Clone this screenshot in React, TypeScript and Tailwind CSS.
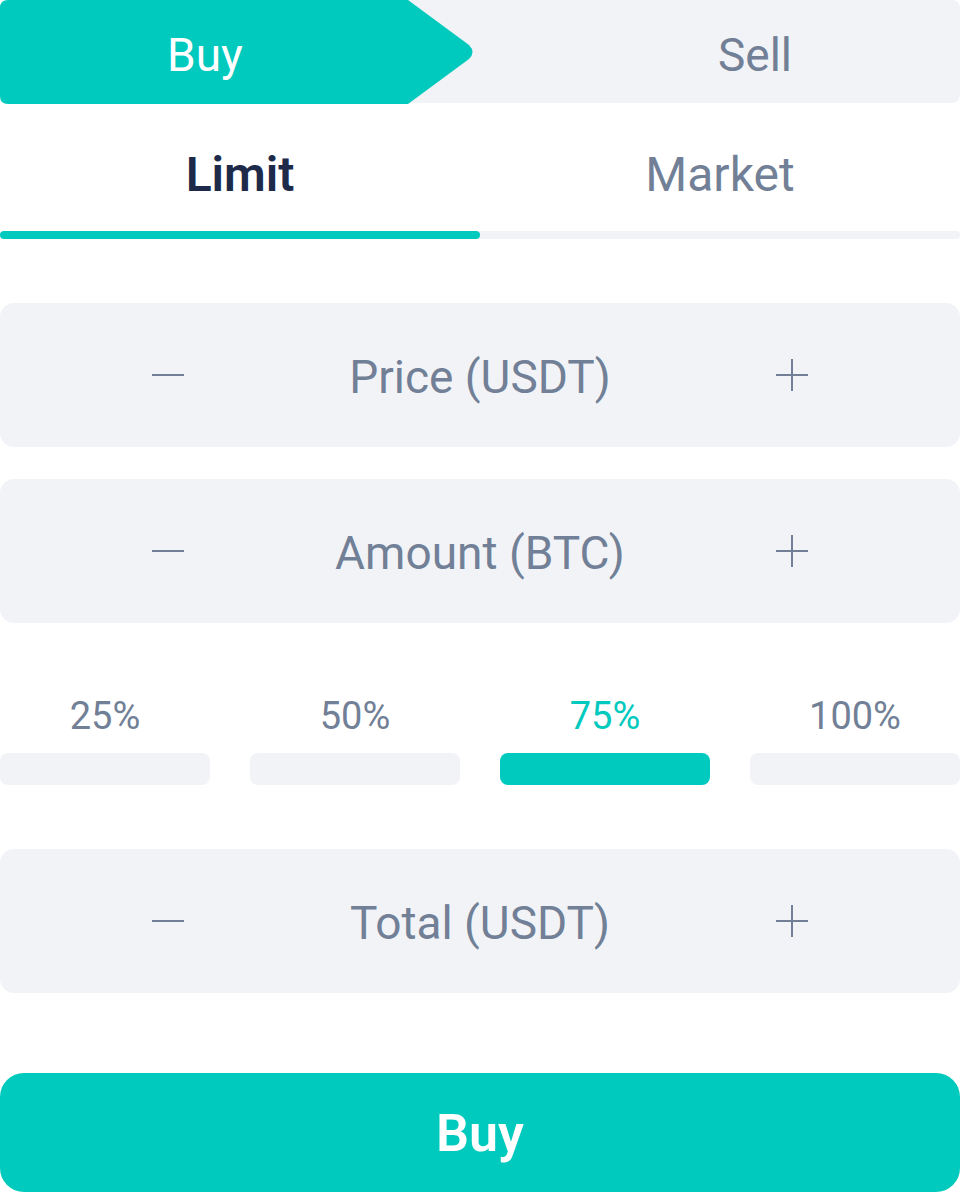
import { useState } from 'react'

const TEAL = '#00c9bd'

const Minus = () => (
  <svg width="32" height="32" viewBox="0 0 32 32" fill="none">
    <path d="M0 16h32" stroke="#718096" strokeWidth="2" />
  </svg>
)

const Plus = () => (
  <svg width="32" height="32" viewBox="0 0 32 32" fill="none">
    <path d="M0 16h32M16 0v32" stroke="#718096" strokeWidth="2" />
  </svg>
)

const StepField = ({ label }: { label: string }) => (
  <div className="h-[144px] rounded-[14px] bg-[#f2f3f7] flex items-center justify-between px-[152px]">
    <Minus />
    <span className="text-[46px] text-[#718096] leading-none pt-[4px]">{label}</span>
    <Plus />
  </div>
)

const App = () => {
  const [side, setSide] = useState<'buy' | 'sell'>('buy')
  const [type, setType] = useState<'limit' | 'market'>('limit')
  const [pct, setPct] = useState(75)

  return (
    <div className="w-[960px] h-[1192px] bg-white flex flex-col" style={{ fontFamily: 'Roboto, "Open Sans", sans-serif' }}>
      <div className="h-[104px] rounded-lg bg-[#f2f3f7] flex">
        <button onClick={() => setSide('buy')} className="relative w-[480px] h-full flex items-center">
          {side === 'buy' && (
            <svg className="absolute inset-0" width="480" height="104" viewBox="0 0 480 104">
              <path d="M8 0H408L469 45Q476 52 469 59L408 104H8Q0 104 0 96V8Q0 0 8 0Z" fill={TEAL} />
            </svg>
          )}
          <span className={`relative w-[410px] text-center text-[46px] leading-none pt-[6px] ${side === 'buy' ? 'text-white' : 'text-[#718096]'}`}>Buy</span>
        </button>
        <button onClick={() => setSide('sell')} className="flex-1 h-full flex items-center justify-center pl-[70px]">
          <span className="text-[46px] leading-none pt-[6px] text-[#718096]">Sell</span>
        </button>
      </div>

      <div className="flex h-[128px] items-center">
        {(['limit', 'market'] as const).map((t) => (
          <button key={t} onClick={() => setType(t)} className="flex-1 flex justify-center pt-[16px]">
            <span className={`text-[48px] leading-none ${type === t ? 'font-semibold text-[#1e2a4a]' : 'font-normal text-[#718096]'}`}>
              {t === 'limit' ? 'Limit' : 'Market'}
            </span>
          </button>
        ))}
      </div>
      <div className="h-[8px] rounded-full bg-[#f2f3f7] flex">
        <div className={`w-1/2 h-full rounded-full ${type === 'limit' ? 'bg-[#00c9bd]' : ''}`} />
        <div className={`w-1/2 h-full rounded-full ${type === 'market' ? 'bg-[#00c9bd]' : ''}`} />
      </div>

      <div className="mt-[64px] flex flex-col gap-[32px]">
        <StepField label="Price (USDT)" />
        <StepField label="Amount (BTC)" />
      </div>

      <div className="mt-[74px] grid grid-cols-4 gap-[40px]">
        {[25, 50, 75, 100].map((p) => (
          <button key={p} onClick={() => setPct(p)} className="flex flex-col items-center gap-[18px]">
            <span className={`text-[38px] leading-none ${pct === p ? 'text-[#00c9bd]' : 'text-[#718096]'}`}>{p}%</span>
            <span className={`w-full h-[32px] rounded-lg ${pct === p ? 'bg-[#00c9bd]' : 'bg-[#f2f3f7]'}`} />
          </button>
        ))}
      </div>

      <div className="mt-[64px]">
        <StepField label="Total (USDT)" />
      </div>

      <button className="mt-[80px] h-[120px] rounded-[24px] bg-[#00c9bd] flex items-center justify-center">
        <span className="text-[52px] font-semibold text-white leading-none pt-[4px]">Buy</span>
      </button>
    </div>
  )
}

export default App
